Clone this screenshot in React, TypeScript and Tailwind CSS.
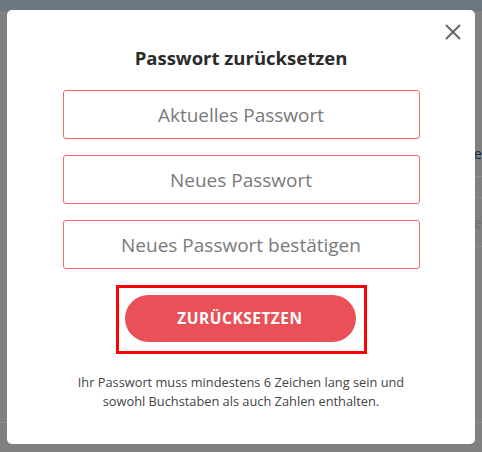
import { X } from 'lucide-react';

const fields = ['Aktuelles Passwort', 'Neues Passwort', 'Neues Passwort bestätigen'];

const App = () => {
  return (
    <div
      className="relative w-[482px] h-[452px] overflow-hidden bg-[#808080]"
      style={{ fontFamily: '"Open Sans", "Noto Sans", sans-serif' }}
    >
      {/* page behind the overlay */}
      <div className="h-[11px] bg-[#6b7880]" />
      <div className="flex flex-col items-end">
        <div className="h-[130px]" />
        <div className="w-[20px] h-[24px] text-[15px] leading-[24px] text-[#1c2a55] text-right">ne</div>
        <div className="w-[20px] h-[12px] border-b border-[#8c8c8c]" />
        <div className="w-[20px] h-[21px] border-b border-[#8c8c8c]" />
        <div className="w-[20px] h-[48px] text-[15px] leading-[48px] text-[#6f6f6f] text-right">e</div>
        <div className="w-[20px] border-b border-[#8c8c8c]" />
      </div>
      <div className="absolute left-0 top-[422px] w-full border-b border-[#8c8c8c]" />

      {/* modal */}
      <div className="absolute left-[7px] top-[10px] w-[468px] h-[434px] bg-white rounded-[5px] flex flex-col items-center">
        <button className="absolute left-[433px] top-[9px] text-[#666] flex items-center justify-center">
          <X size={26} strokeWidth={1.8} />
        </button>

        <h2 className="mt-[36px] h-[24px] text-[18.5px] leading-[24px] font-bold text-[#2b2b2b]">
          Passwort zurücksetzen
        </h2>

        <div className="mt-[20px] flex flex-col gap-[16px]">
          {fields.map((f) => (
            <input
              key={f}
              type="password"
              placeholder={f}
              className="w-[357px] h-[49px] rounded-[3px] border border-[#f26b6b] bg-white text-center text-[19px] text-[#777] placeholder:text-[#7a7a7a] outline-none"
            />
          ))}
        </div>

        <div className="mt-[16px] w-[251px] h-[69px] border-[3px] border-[#ff0000] pl-[6px] pt-[7px]">
          <button className="w-[231px] h-[47px] rounded-full bg-[#e95057] text-white text-[15.5px] font-bold tracking-[0.5px]">
            ZURÜCKSETZEN
          </button>
        </div>

        <p className="mt-[19px] text-center text-[12.8px] leading-[19px] text-[#444]">
          Ihr Passwort muss mindestens 6 Zeichen lang sein und
          <br />
          sowohl Buchstaben als auch Zahlen enthalten.
        </p>
      </div>
    </div>
  );
};

export default App;
